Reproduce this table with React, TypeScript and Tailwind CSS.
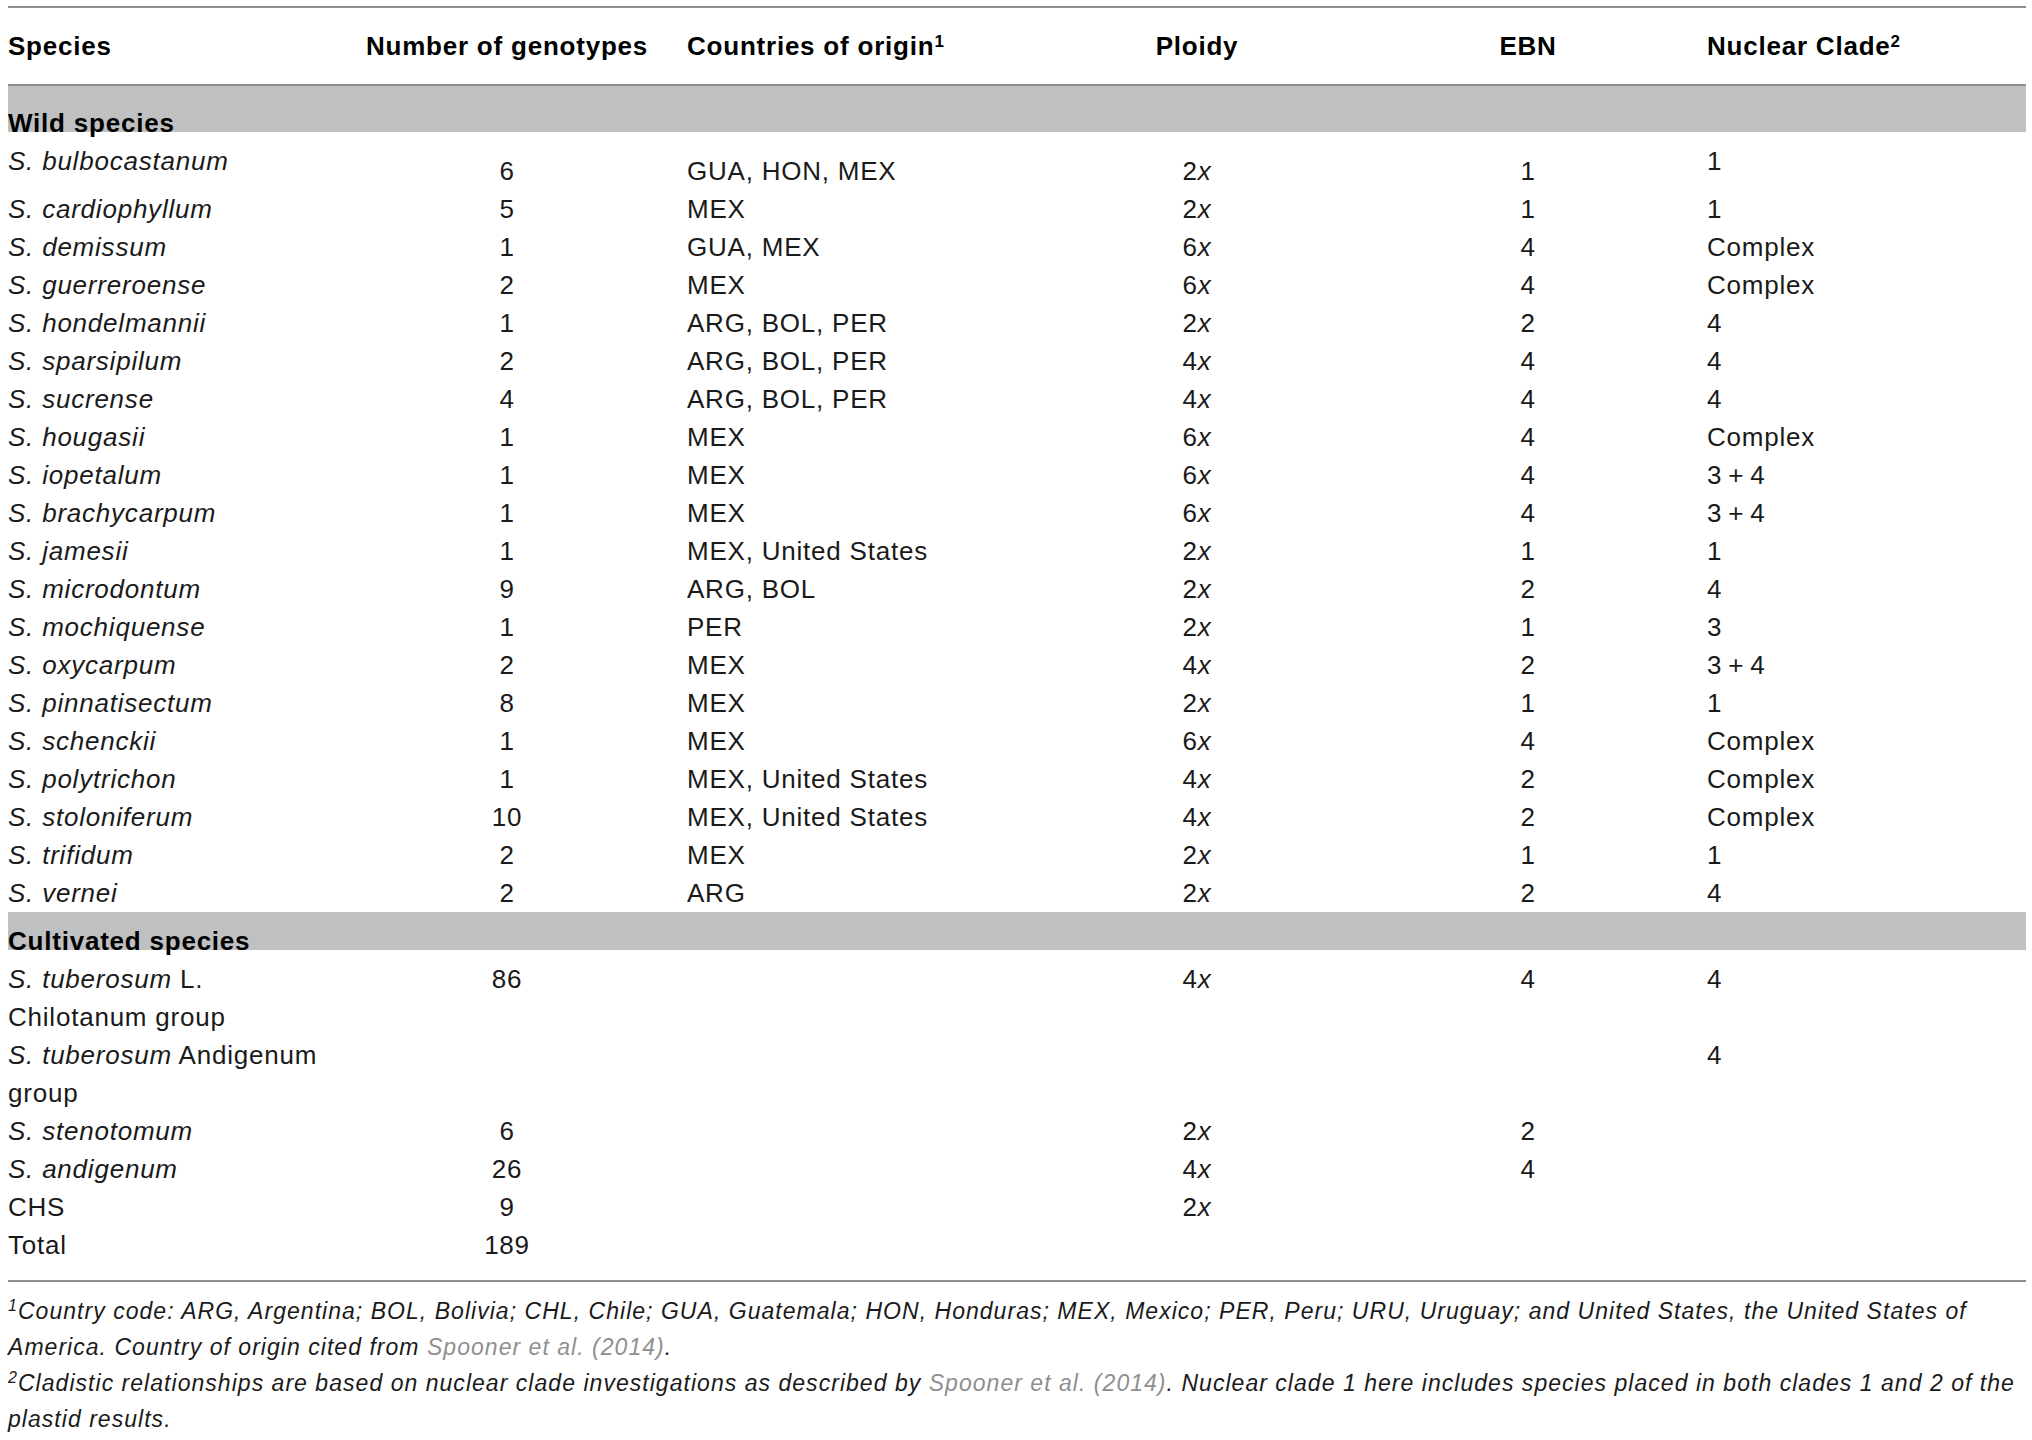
import React from 'react';

const cols = 'grid grid-cols-[344px_310px_378px_314px_348px_1fr]';

const wild: [string, string, string, string, string, string][] = [
  ['bulbocastanum', '6', 'GUA, HON, MEX', '2', '1', '1'],
  ['cardiophyllum', '5', 'MEX', '2', '1', '1'],
  ['demissum', '1', 'GUA, MEX', '6', '4', 'Complex'],
  ['guerreroense', '2', 'MEX', '6', '4', 'Complex'],
  ['hondelmannii', '1', 'ARG, BOL, PER', '2', '2', '4'],
  ['sparsipilum', '2', 'ARG, BOL, PER', '4', '4', '4'],
  ['sucrense', '4', 'ARG, BOL, PER', '4', '4', '4'],
  ['hougasii', '1', 'MEX', '6', '4', 'Complex'],
  ['iopetalum', '1', 'MEX', '6', '4', '3\u2009+\u20094'],
  ['brachycarpum', '1', 'MEX', '6', '4', '3\u2009+\u20094'],
  ['jamesii', '1', 'MEX, United States', '2', '1', '1'],
  ['microdontum', '9', 'ARG, BOL', '2', '2', '4'],
  ['mochiquense', '1', 'PER', '2', '1', '3'],
  ['oxycarpum', '2', 'MEX', '4', '2', '3\u2009+\u20094'],
  ['pinnatisectum', '8', 'MEX', '2', '1', '1'],
  ['schenckii', '1', 'MEX', '6', '4', 'Complex'],
  ['polytrichon', '1', 'MEX, United States', '4', '2', 'Complex'],
  ['stoloniferum', '10', 'MEX, United States', '4', '2', 'Complex'],
  ['trifidum', '2', 'MEX', '2', '1', '1'],
  ['vernei', '2', 'ARG', '2', '2', '4'],
];

type RowProps = {
  name: React.ReactNode;
  n?: string;
  origin?: string;
  ploidy?: string;
  ebn?: string;
  clade?: string;
  pad?: string;
  valPad?: string;
};

const Row = ({ name, n, origin, ploidy, ebn, clade, pad = '', valPad = '' }: RowProps) => (
  <div className={`${cols} items-start leading-[38px]`}>
    <div className={pad}>{name}</div>
    <div className={`text-center ${valPad}`}>{n}</div>
    <div className={`pl-[25px] ${valPad}`}>{origin}</div>
    <div className={`text-center ${valPad}`}>
      {ploidy && (
        <>
          {ploidy}
          <i>x</i>
        </>
      )}
    </div>
    <div className={`text-center ${valPad}`}>{ebn}</div>
    <div className={`pl-[5px] ${pad}`}>{clade}</div>
  </div>
);

const Band = ({ label, h }: { label: string; h: string }) => (
  <div className={`flex items-end bg-[#bfc0c2] ${h}`}>
    <div className="font-bold text-black leading-[26px] -mb-[4px]">{label}</div>
  </div>
);

const Link = ({ children }: { children: React.ReactNode }) => (
  <span className="text-[#8f8f8f]">{children}</span>
);

export default function App() {
  return (
    <div className="min-h-screen bg-white pt-[6px] pl-[8px] font-['Liberation_Sans',Arial,sans-serif] text-[26px] tracking-[0.03em] text-[#1a1a1a]">
      <div className="w-[2018px]">
        {/* Column headings */}
        <div className={`${cols} h-[76px] items-center border-y-2 border-[#8e8e8e] font-bold text-black leading-[26px] box-content`}>
          <div>Species</div>
          <div className="text-center">Number of genotypes</div>
          <div className="pl-[25px]">
            Countries of origin<sup className="text-[17px] tracking-normal">1</sup>
          </div>
          <div className="text-center">Ploidy</div>
          <div className="text-center">EBN</div>
          <div className="pl-[5px]">
            Nuclear Clade<sup className="text-[17px] tracking-normal">2</sup>
          </div>
        </div>

        <Band label="Wild species" h="h-[46px]" />
        {wild.map(([sp, n, origin, ploidy, ebn, clade], i) => (
          <Row
            key={sp}
            name={<i>S. {sp}</i>}
            n={n}
            origin={origin}
            ploidy={ploidy}
            ebn={ebn}
            clade={clade}
            pad={i === 0 ? 'pt-[10px]' : ''}
            valPad={i === 0 ? 'pt-[20px]' : ''}
          />
        ))}

        <Band label="Cultivated species" h="h-[38px]" />
        <Row
          name={
            <>
              <i>S. tuberosum</i> L.
              <br />
              Chilotanum group
            </>
          }
          n="86"
          ploidy="4"
          ebn="4"
          clade="4"
          pad="pt-[10px]"
          valPad="pt-[10px]"
        />
        <Row
          name={
            <>
              <i>S. tuberosum</i> Andigenum
              <br />
              group
            </>
          }
          clade="4"
        />
        <Row name={<i>S. stenotomum</i>} n="6" ploidy="2" ebn="2" />
        <Row name={<i>S. andigenum</i>} n="26" ploidy="4" ebn="4" />
        <Row name="CHS" n="9" ploidy="2" />
        <Row name="Total" n="189" />

        {/* Footnotes */}
        <div className="mt-[16px] border-t-2 border-[#8e8e8e] pt-[11px] text-[23px] italic leading-[36px] tracking-[0.045em] whitespace-nowrap">
          <div>
            <sup className="text-[16px]">1</sup>Country code: ARG, Argentina; BOL, Bolivia; CHL, Chile; GUA, Guatemala; HON, Honduras;
            MEX, Mexico; PER, Peru; URU, Uruguay; and United States, the United States of
            <br />
            America. Country of origin cited from <Link>Spooner et al. (2014)</Link>.
          </div>
          <div>
            <sup className="text-[16px]">2</sup>Cladistic relationships are based on nuclear clade investigations as described by{' '}
            <Link>Spooner et al. (2014)</Link>. Nuclear clade 1 here includes species placed in both clades 1 and 2 of the
            <br />
            plastid results.
          </div>
        </div>
      </div>
    </div>
  );
}
